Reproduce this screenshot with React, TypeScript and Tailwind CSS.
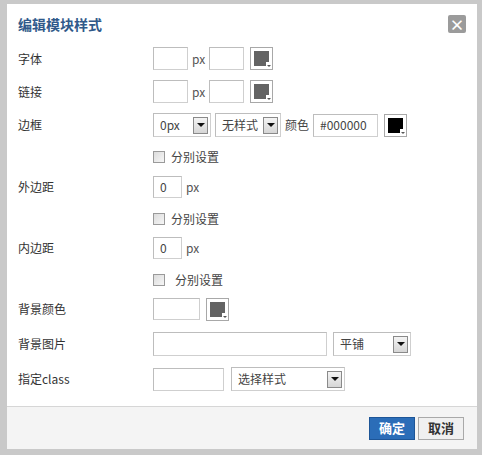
import React from "react";

const font = { fontFamily: '"Noto Sans CJK SC", "Liberation Sans", sans-serif' };

function TextBox({ w, value }: { w: string; value?: string }) {
  return (
    <div
      className={`${w} h-[23px] border border-[#cfcfcf] border-t-[#bdbdbd] border-l-[#bdbdbd] bg-white flex items-center px-[6px] text-[12px] text-[#444]`}
    >
      {value}
    </div>
  );
}

function Arrow() {
  return (
    <span className="w-[15px] h-[17px] border border-[#8a8a8a] bg-gradient-to-b from-[#f4f4f4] to-[#d6d6d6] flex items-center justify-center">
      <span className="w-0 h-0 border-l-[4px] border-r-[4px] border-t-[4px] border-l-transparent border-r-transparent border-t-[#111]" />
    </span>
  );
}

function Select({ w, label }: { w: string; label: string }) {
  return (
    <div className={`${w} h-[24px] border border-[#cfcfcf] border-t-[#bdbdbd] border-l-[#bdbdbd] bg-white flex items-center justify-between pl-[6px] pr-[2px] text-[12px] text-[#444]`}>
      <span>{label}</span>
      <Arrow />
    </div>
  );
}

function ColorBtn({ fill }: { fill: string }) {
  return (
    <div className="relative w-[23px] h-[23px] border border-[#a8a8a8] bg-white p-[3px]">
      <div className={`w-[15px] h-[15px] ${fill}`} />
      <span className="absolute right-[1px] bottom-[2px] w-[5px] h-[5px] bg-white flex items-end justify-center">
        <span className="w-0 h-0 border-l-[2px] border-r-[2px] border-t-[2px] border-l-transparent border-r-transparent border-t-[#555]" />
      </span>
    </div>
  );
}

function Check({ extra }: { extra?: string }) {
  return (
    <div className="flex items-center h-[16px] pl-[135px]">
      <span className="w-[12px] h-[12px] border border-[#9a9a9a] bg-gradient-to-br from-[#dcdcdc] to-[#f6f6f6]" />
      <span className={`${extra ?? "ml-[6px]"} text-[12px] text-[#444]`}>分别设置</span>
    </div>
  );
}

function Row({ label, className, children }: { label: string; className: string; children: React.ReactNode }) {
  return (
    <div className={`flex items-center ${className}`}>
      <span className="w-[135px] text-[12px] text-[#333]">{label}</span>
      <div className="flex items-center">{children}</div>
    </div>
  );
}

export default function App() {
  return (
    <div className="w-[482px] h-[455px] bg-[#c9c9c9] pt-[4px] pl-[7px]" style={font}>
      <div className="w-[470px] h-[445px] bg-white flex flex-col">
        <div className="h-[40px] px-[11px] flex items-center justify-between">
          <span className="text-[14px] font-bold text-[#30598a]">编辑模块样式</span>
          <span className="w-[18px] h-[18px] rounded-[2px] bg-[#9b9b9b] flex items-center justify-center text-white text-[15px] font-bold leading-none">
            ×
          </span>
        </div>

        <div className="flex-1 pl-[11px]">
          <Row label="字体" className="mt-[3px] h-[23px]">
            <TextBox w="w-[35px]" />
            <span className="mx-[4px] text-[12px] text-[#555]">px</span>
            <TextBox w="w-[35px]" />
            <span className="ml-[6px]"><ColorBtn fill="bg-[#636363]" /></span>
          </Row>
          <Row label="链接" className="mt-[10px] h-[23px]">
            <TextBox w="w-[35px]" />
            <span className="mx-[4px] text-[12px] text-[#555]">px</span>
            <TextBox w="w-[35px]" />
            <span className="ml-[6px]"><ColorBtn fill="bg-[#636363]" /></span>
          </Row>
          <Row label="边框" className="mt-[10px] h-[24px]">
            <Select w="w-[58px]" label="0px" />
            <span className="ml-[4px]"><Select w="w-[66px]" label="无样式" /></span>
            <span className="ml-[4px] mr-[4px] text-[12px] text-[#444]">颜色</span>
            <TextBox w="w-[65px]" value="#000000" />
            <span className="ml-[6px]"><ColorBtn fill="bg-black" /></span>
          </Row>
          <div className="mt-[12px]"><Check /></div>
          <Row label="外边距" className="mt-[11px] h-[22px]">
            <TextBox w="w-[29px] !h-[22px]" value="0" />
            <span className="ml-[4px] text-[12px] text-[#555]">px</span>
          </Row>
          <div className="mt-[13px]"><Check /></div>
          <Row label="内边距" className="mt-[10px] h-[22px]">
            <TextBox w="w-[29px] !h-[22px]" value="0" />
            <span className="ml-[4px] text-[12px] text-[#555]">px</span>
          </Row>
          <div className="mt-[13px]"><Check extra="ml-[10px]" /></div>
          <Row label="背景颜色" className="mt-[10px] h-[22px]">
            <TextBox w="w-[47px] !h-[22px]" />
            <span className="ml-[6px]"><ColorBtn fill="bg-[#636363]" /></span>
          </Row>
          <Row label="背景图片" className="mt-[12px] h-[24px]">
            <TextBox w="w-[174px] !h-[24px]" />
            <span className="ml-[6px]"><Select w="w-[78px]" label="平铺" /></span>
          </Row>
          <Row label="指定class" className="mt-[11px] h-[24px]">
            <TextBox w="w-[71px] !h-[23px]" />
            <span className="ml-[7px]"><Select w="w-[114px]" label="选择样式" /></span>
          </Row>
        </div>

        <div className="h-[43px] border-t border-[#d6d6d6] bg-[#f4f4f4] flex items-center justify-end gap-[3px] pr-[13px]">
          <span className="w-[46px] h-[23px] bg-[#2b6db8] border border-[#1d5597] text-white text-[13px] font-bold flex items-center justify-center">
            确定
          </span>
          <span className="w-[46px] h-[23px] bg-[#f0f0f0] border border-[#a9a9a9] text-[#333] text-[13px] font-bold flex items-center justify-center">
            取消
          </span>
        </div>
      </div>
    </div>
  );
}
